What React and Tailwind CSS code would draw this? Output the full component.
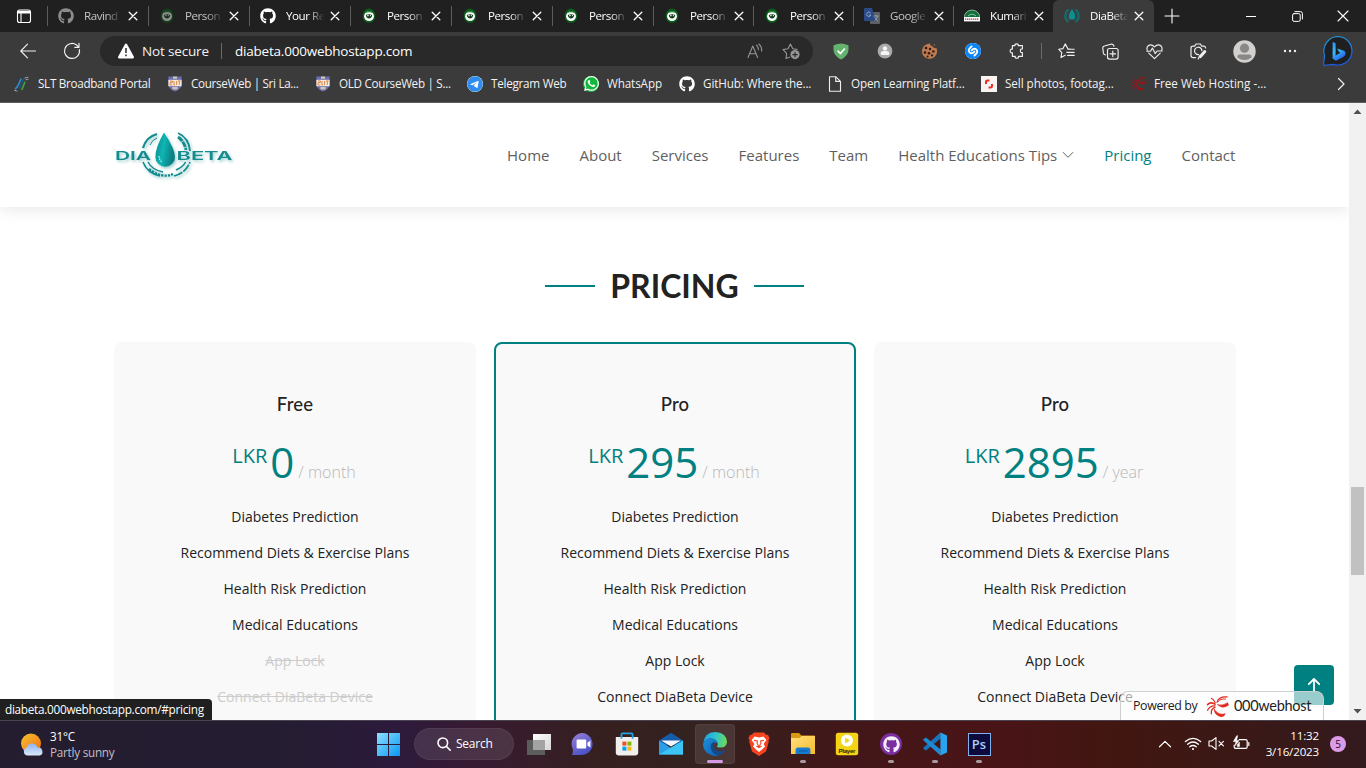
import React from "react";
import { FaGithub, FaTelegram, FaWhatsapp } from "react-icons/fa6";
import { SiShazam } from "react-icons/si";

const UI = "font-['Open_Sans','Noto_Sans',sans-serif]";

function Stroke({ size = 16, box = 16, w = 1, children, className = "" }) {
  return (
    <svg width={size} height={size} viewBox={`0 0 ${box} ${box}`} fill="none" stroke="currentColor" strokeWidth={w} strokeLinecap="round" strokeLinejoin="round" className={className}>
      {children}
    </svg>
  );
}

function EyeIcon() {
  return (
    <svg width="16" height="16" viewBox="0 0 16 16">
      <ellipse cx="8" cy="7.8" rx="6.4" ry="7.2" fill="#0c5c1b" />
      <circle cx="8" cy="8.2" r="4.9" fill="#fff" />
      <path d="M3.6 5Q8 1 12.4 5Q8 3.4 3.6 5Z" fill="#1b7a2c" />
      <path d="M4.8 7Q8 5.6 11.2 7Q10.8 10.4 8 10.4Q5.2 10.4 4.8 7Z" fill="#123f1c" />
      <circle cx="6.9" cy="7.6" r="0.8" fill="#fff" />
      <circle cx="9.4" cy="7.6" r="0.6" fill="#fff" />
    </svg>
  );
}

function TranslateIcon() {
  return (
    <svg width="16" height="16" viewBox="0 0 16 16">
      <rect x="6" y="4" width="10" height="12" rx="1" fill="#5d6066" />
      <path d="M0 1Q0 0 1 0H8L12 13H1Q0 13 0 12Z" fill="#2b4a86" />
      <path d="M6.6 5A2.2 2.2 0 1 0 6.9 7H4.8" stroke="#8fa3c9" fill="none" />
      <path d="M9.5 8H14.5M12 7V8M13.6 8Q13 11 10.5 12.6M10.8 9.5Q12 12 14 13" stroke="#a6a8ac" strokeWidth="0.8" fill="none" />
    </svg>
  );
}

function KumariIcon() {
  return (
    <svg width="16" height="16" viewBox="0 0 16 16">
      <path d="M0 9.5Q1 2.5 8 2Q15 2.5 16 9.5Z" fill="#12703a" stroke="#d9ece0" strokeWidth="0.6" />
      <path d="M4 8Q8 4.4 12 8" stroke="#b9dcc6" strokeWidth="0.7" fill="none" />
      <rect x="0" y="9" width="16" height="4.4" fill="#fff" />
      <path d="M1 11.2H15" stroke="#9a4450" strokeWidth="1.2" strokeDasharray="1.4 0.6" />
    </svg>
  );
}

function DropIcon() {
  return (
    <svg width="16" height="16" viewBox="0 0 16 16" fill="none" stroke="#0a7f80">
      <path d="M5.2 1.4A7.2 7.2 0 0 0 4.4 14.2M10.8 1.4A7.2 7.2 0 0 1 11.6 14.2" strokeWidth="1.1" />
      <path d="M4 4A5.5 5.5 0 0 0 5.6 12.8M12 4A5.5 5.5 0 0 1 10.4 12.8" strokeWidth="0.8" />
      <path d="M8 1Q11.4 6 11.2 8.4A3.2 3.2 0 0 1 4.8 8.4Q4.6 6 8 1Z" fill="#0c8f90" stroke="none" />
    </svg>
  );
}

const tabs = [
  { icon: <FaGithub size={16} className="text-[#8c8c8c]" />, text: "Ravind", dim: true },
  { icon: <span className="opacity-50"><EyeIcon /></span>, text: "Person", dim: true },
  { icon: <FaGithub size={16} className="text-white" />, text: "Your Re" },
  { icon: <EyeIcon />, text: "Person" },
  { icon: <EyeIcon />, text: "Person" },
  { icon: <EyeIcon />, text: "Person" },
  { icon: <EyeIcon />, text: "Person", narrow: true },
  { icon: <EyeIcon />, text: "Person", narrow: true },
  { icon: <TranslateIcon />, text: "Google", dim: true, narrow: true },
  { icon: <KumariIcon />, text: "Kumari", narrow: true },
  { icon: <DropIcon />, text: "DiaBeta", active: true },
];

function Tab({ tab }) {
  return (
    <div className={"flex h-8 shrink-0 items-center " + (tab.narrow ? "w-[100px] " : "w-[101px] ") + (tab.active ? "rounded-t-[6px] bg-[#3b3b3b]" : "")}>
      <div className={"h-5 w-px shrink-0 " + (tab.active ? "" : "bg-[#5c5c5c]")} />
      <div className="ml-[10px] flex w-4 shrink-0 justify-center">{tab.icon}</div>
      <div className={"ml-[10px] w-[39px] shrink-0 overflow-hidden whitespace-nowrap text-[11.6px] leading-4 tracking-[-0.04em] [mask-image:linear-gradient(90deg,#000_55%,transparent_98%)] " + (tab.dim ? "text-[#c4c4c4]" : "text-white")}>{tab.text}</div>
      <Stroke size={10} box={10} w={1.3} className="ml-[5px] shrink-0 text-white"><path d="M1.2 1.2L8.8 8.8M8.8 1.2L1.2 8.8" /></Stroke>
    </div>
  );
}

function TabStrip() {
  return (
    <div className="flex h-8 items-center bg-[#202020]">
      <div className="flex w-[47px] shrink-0 justify-center">
        <Stroke size={16} w={1.1} className="text-white"><rect x="1.5" y="2" width="13" height="12.5" rx="2" /><path d="M1.8 4.2H14.2" strokeWidth="2.6" strokeLinecap="butt" /><path d="M5 5V14.4" /></Stroke>
      </div>
      {tabs.map((t, i) => <Tab key={i} tab={t} />)}
      <div className="flex w-[35px] justify-center text-white"><Stroke size={16} w={1.1}><path d="M8 1V15M1 8H15" /></Stroke></div>
      <div className="ml-auto flex items-center text-white">
        <div className="flex w-[46px] justify-center"><Stroke size={10} box={10}><path d="M0 5.5H10" /></Stroke></div>
        <div className="flex w-[46px] justify-center"><Stroke size={11} box={11}><rect x="0.6" y="2.6" width="7.6" height="7.8" rx="1.5" /><path d="M3 0.6H8.4Q10.4 0.6 10.4 2.6V8" /></Stroke></div>
        <div className="flex w-[46px] justify-center"><Stroke size={12} box={12} w={1.1}><path d="M1 1L11 11M11 1L1 11" /></Stroke></div>
      </div>
    </div>
  );
}

function Cell({ children, w = "w-11" }) {
  return <div className={"flex h-[38px] shrink-0 items-center justify-center " + w}>{children}</div>;
}

function BingIcon() {
  return (
    <svg width="32" height="32" viewBox="0 0 32 32">
      <defs>
        <linearGradient id="bingRing" x1="0" y1="0" x2="0.3" y2="1"><stop offset="0" stopColor="#1fa5dc" /><stop offset="1" stopColor="#1c5be0" /></linearGradient>
        <linearGradient id="bingB" x1="0" y1="0" x2="0.5" y2="1"><stop offset="0" stopColor="#2b8bf0" /><stop offset="0.5" stopColor="#37bdf5" /><stop offset="1" stopColor="#2563eb" /></linearGradient>
      </defs>
      <path d="M16 1.5A14.5 14.3 0 1 1 11 29.4L2.2 30.4Q1.4 30.4 1.6 29L2.6 20.6A14.5 14.5 0 0 1 16 1.5Z" fill="#1f1f22" stroke="url(#bingRing)" strokeWidth="1.2" />
      <path d="M10.6 6.8L13.6 8.2V20.4L18.4 17.7L16.8 16.8L15.3 13.4L22.4 16Q23.6 17 23.6 18.5Q23.6 20.6 21.6 21.8L14 25.8L10.6 23.4Z" fill="url(#bingB)" />
    </svg>
  );
}

function Toolbar() {
  return (
    <div className="flex h-[38px] items-center bg-[#3b3b3b] pl-[6px] text-[#f0f0f0]">
      <Cell><Stroke size={16} w={1.1}><path d="M15.5 8H0.8M7.5 1.2L0.8 8L7.5 14.8" /></Stroke></Cell>
      <Cell><Stroke size={18} box={18} w={1.15}><path d="M16.4 7.6A7.5 7.5 0 1 1 13.6 3L15.8 5.2M16 1.2V5.4H11.8" /></Stroke></Cell>
      <div className="ml-[6px] flex h-[30px] w-[713px] shrink-0 items-center rounded-full bg-[#292929] pl-[18px]">
        <svg width="16" height="16" viewBox="0 0 16 16"><path d="M8 0.5Q8.7 0.5 9.1 1.3L15.8 13.6Q16.4 15.5 14.7 15.5H1.3Q-0.4 15.5 0.2 13.6L6.9 1.3Q7.3 0.5 8 0.5Z" fill="#fff" /><path d="M8 5V10M8 11.6V13.2" stroke="#292929" strokeWidth="1.5" /></svg>
        <div className="ml-2 w-[79px] whitespace-nowrap text-[13.5px] leading-5 tracking-[-0.012em] text-[#f2f2f2]">Not secure</div>
        <div className="h-4 w-px bg-[#6a6a6a]" />
        <div className="ml-[13px] whitespace-nowrap text-[13.5px] leading-5 tracking-[-0.016em] text-white">diabeta.000webhostapp.com</div>
        <div className="ml-auto mr-[13px] flex items-center gap-[19px] text-[#959595]">
          <Stroke size={16} w={1.1}><path d="M1 14.5L5.8 3L10.6 14.5M2.6 10.8H9M9.5 2.2Q11.4 3.6 11.4 6.6M11.8 1Q15 3.4 14.6 8" /></Stroke>
          <svg width="18" height="18" viewBox="0 0 18 18"><path d="M8 15L4 16.5L4.6 11.4L1 7.6L6 6.8L8.4 2L10.8 6.8L15.6 7.5" fill="none" stroke="currentColor" strokeWidth="1.1" strokeLinejoin="round" /><circle cx="13" cy="12.6" r="4.6" fill="currentColor" /><path d="M13 10V15.2M10.4 12.6H15.6" stroke="#292929" strokeWidth="1.1" /></svg>
        </div>
      </div>
      <div className="w-[6px] shrink-0" />
      <Cell><svg width="16" height="17" viewBox="0 0 16 17"><path d="M8 0.5Q11 0.8 15.5 2.2V7Q15 13 8 16.5Q1 13 0.5 7V2.2Q5 0.8 8 0.5Z" fill="#63b36e" /><path d="M4.6 7.6L7.4 10.6L11.8 5.4" fill="none" stroke="#fff" strokeWidth="1.6" /></svg></Cell>
      <Cell><svg width="16" height="16" viewBox="0 0 16 16"><circle cx="8" cy="8" r="7.4" fill="#a9a9a9" /><circle cx="8" cy="5.4" r="2.2" fill="#f5f5f5" /><path d="M3.8 12V9.6Q4.4 7.8 8 7.8Q11.6 7.8 12.2 9.6V12Z" fill="#f5f5f5" /></svg></Cell>
      <Cell><svg width="16" height="16" viewBox="0 0 16 16"><path d="M9 0.5Q9 3 11.5 3Q11.5 5 15.5 5.2A7.6 7.6 0 1 1 3 3Q6 0.3 9 0.5Z" fill="#bd7a50" /><g fill="#2a1b14"><circle cx="5" cy="5" r="1.3" /><circle cx="9" cy="6" r="1.2" /><circle cx="4" cy="9.5" r="1.3" /><circle cx="8" cy="10.2" r="1.3" /><circle cx="12.4" cy="8.4" r="1.2" /><circle cx="11" cy="12.4" r="1.1" /><circle cx="6.6" cy="13.4" r="1" /><circle cx="13.5" cy="2" r="0.9" fill="#8a573a" /></g></svg></Cell>
      <Cell><span className="rounded-full bg-white"><SiShazam size={16} className="text-[#0a84f7]" /></span></Cell>
      <Cell><Stroke size={16} w={1.15}><path d="M3.4 2.6H6Q5.6 0.8 7.6 0.8Q9.6 0.8 9.2 2.6H13.4V6Q11.4 5.6 11.4 7.8Q11.4 10 13.4 9.6V13.4H9.4Q9.8 15.2 7.8 15.2Q5.8 15.2 6.2 13.4H3.4V9.8Q1.2 10.4 1.2 8Q1.2 5.6 3.4 6.2Z" /></Stroke></Cell>
      <div className="ml-[2px] mr-[2px] h-4 w-px shrink-0 bg-[#6a6a6a]" />
      <Cell><Stroke size={17} box={17} w={1.15}><path d="M12.2 6H10L7.2 0.9L5 5.6L0.8 6.3L3.8 9.6L3 14.4L7.2 12.2M9.8 6.2H16.2M8.8 9.3H16.2M9.6 12.4H16.2" /></Stroke></Cell>
      <Cell><Stroke size={17} box={17} w={1.15}><rect x="5.5" y="5.5" width="10.6" height="10.6" rx="2" /><path d="M10.8 8V13.6M8 10.8H13.6M3.4 11.8Q1.6 11.8 1.4 10L0.8 5.2Q0.6 3.4 2.4 3L8.8 1.2Q11 0.8 11.8 2.6V3.2" /></Stroke></Cell>
      <Cell><Stroke size={17} box={17} w={1.15}><path d="M1.2 7.2Q0.4 4.4 2.2 2.8Q5.2 0.6 8.5 3.8Q11.8 0.6 14.8 2.8Q16.6 4.4 15.8 7.2M2.8 10.2L8.5 15.6L14.2 10.2M0.8 8.2H4.6L6.4 5L9.2 10.6L11 8H16.2" /></Stroke></Cell>
      <Cell><Stroke size={17} box={17} w={1.2}><path d="M5.6 14.6H3Q1 14.6 1 12.6V5Q1 3.2 3 3.2H4.6L6 1H10.4L11.8 3.2H13.6Q15.4 3.2 15.6 5M8.6 11.6A3.7 3.7 0 1 1 11.9 7.6" /><path d="M10.4 13.6L14.8 8.6" strokeWidth="3" /><path d="M8.2 16L9.6 13" /></Stroke></Cell>
      <Cell w="w-[48px]"><svg width="23" height="23" viewBox="0 0 23 23"><circle cx="11.5" cy="11.5" r="11.2" fill="#d2d0ce" /><circle cx="11.5" cy="8.2" r="4.6" fill="#8a8886" /><path d="M4.4 17.4Q4 14.4 7 14.4H16Q19 14.4 18.6 17.4Q11.5 22.4 4.4 17.4Z" fill="#8a8886" /></svg></Cell>
      <Cell><svg width="14" height="4" viewBox="0 0 14 4" fill="#eee"><circle cx="2" cy="2" r="1.2" /><circle cx="7" cy="2" r="1.2" /><circle cx="12" cy="2" r="1.2" /></svg></Cell>
      <Cell w="w-[52px]"><BingIcon /></Cell>
    </div>
  );
}

function CrestIcon() {
  return (
    <svg width="16" height="16" viewBox="0 0 16 16">
      <path d="M1.4 0.6H14.6V9Q14.2 13.4 8 15.6Q1.8 13.4 1.4 9Z" fill="#6a6fae" />
      <rect x="1.4" y="3.8" width="13.2" height="6.4" fill="#f4ece6" />
      <path d="M3 5H5.4V6.6H3V9H5.4M7 5V9H8M9.6 5V9M11 5H13.6M12.3 5V9" stroke="#dd8540" strokeWidth="1" fill="none" />
      <path d="M6 0.6H10V2.8H6ZM5.4 11H10.6V13.4H5.4Z" fill="#d4c3b4" />
    </svg>
  );
}

function SwirlIcon({ size = 16, color = "#c01010" }) {
  return (
    <svg width={size} height={size} viewBox="0 0 24 24" fill="none" stroke={color} strokeLinecap="round">
      <path d="M22 2Q13 1.4 11.6 7.6" strokeWidth="1.3" />
      <path d="M20.4 4.2Q15 3.6 12.4 7" strokeWidth="1" />
      <path d="M5.6 3.4Q8 4.6 9.6 8" strokeWidth="1.2" />
      <path d="M1.6 10Q5 6.6 9.4 9.6" strokeWidth="1.6" />
      <path d="M1.6 16Q4 11 9.4 11.4" strokeWidth="1.2" />
      <path d="M5.6 19.6Q5 14.6 9.4 13" strokeWidth="1.3" />
      <path d="M8.6 15Q8.6 20.6 15.4 22.6Q19 23 20 19.6Q13.6 21.6 8.6 15Z" fill={color} strokeWidth="0.6" />
      <path d="M12.2 10.2Q17 15 23.4 10.6Q22.6 8 22.6 8Q18 11.6 12.2 10.2Z" fill={color} strokeWidth="0.6" />
    </svg>
  );
}

const bookmarks = [
  { w: "w-[153px]", t: "SLT Broadband Portal", tr: "tracking-[-0.026em]", icon: <svg width="16" height="16" viewBox="0 0 16 16" fill="none" strokeLinecap="round"><path d="M7 3L3.6 10.4L1.6 12.6" stroke="#2d8fd6" strokeWidth="1.6" /><path d="M10.8 6.4L8 13.4" stroke="#3fa348" strokeWidth="1.6" /><path d="M11 2L14.8 1M0.8 14.4L3 15M12 3.8L14 3.4" stroke="#a7b9c4" strokeDasharray="1 1" /><path d="M9.6 3L5.4 12" stroke="#1d5b86" strokeWidth="1.2" /></svg> },
  { w: "w-[148px]", t: "CourseWeb | Sri La...", tr: "tracking-[-0.028em]", icon: <CrestIcon /> },
  { w: "w-[152px]", t: "OLD CourseWeb | S...", tr: "tracking-[-0.026em]", icon: <CrestIcon /> },
  { w: "w-[116px]", t: "Telegram Web", tr: "tracking-[-0.022em]", icon: <span className="rounded-full bg-white"><FaTelegram size={16} className="text-[#2f8df0]" /></span> },
  { w: "w-[96px]", t: "WhatsApp", tr: "tracking-[-0.01em]", icon: <span className="relative flex h-4 w-4 items-center justify-center rounded-full bg-[#12b83e]"><FaWhatsapp size={17} className="shrink-0 text-white" /></span> },
  { w: "w-[148px]", t: "GitHub: Where the...", tr: "tracking-[-0.01em]", icon: <FaGithub size={16} className="text-white" /> },
  { w: "w-[154px]", t: "Open Learning Platf...", tr: "tracking-[-0.015em]", icon: <Stroke size={16} w={1.1} className="text-[#eee]"><path d="M2.5 0.7H8.7L13.5 5.4V15.3H2.5ZM8.7 0.9V5.4H13.4" /></Stroke> },
  { w: "w-[149px]", t: "Sell photos, footag...", tr: "tracking-[-0.006em]", icon: <svg width="16" height="16" viewBox="0 0 16 16"><rect width="16" height="16" fill="#f8f4f4" /><path d="M8.4 4.4H6.4Q5 4.4 5 5.8V8M7.6 11.6H9.6Q11 11.6 11 10.2V8" stroke="#ee2b24" strokeWidth="2" fill="none" /></svg> },
  { w: "w-[150px]", t: "Free Web Hosting -...", tr: "tracking-[0em]", icon: <SwirlIcon size={15} color="#b00d12" /> },
];

function Bookmarks() {
  return (
    <div className="flex h-[33px] items-center border-b border-[#5d5d5d] bg-[#3b3b3b] pb-[5px] pl-[14px] text-[#f2f2f2]">
      {bookmarks.map((b) => (
        <div key={b.t} className={"flex shrink-0 items-center gap-2 " + b.w}>
          <div className="flex w-4 shrink-0 justify-center">{b.icon}</div>
          <span className={"-mt-px whitespace-nowrap text-[11.7px] leading-4 " + b.tr}>{b.t}</span>
        </div>
      ))}
      <Stroke size={14} box={14} w={1.2} className="ml-auto mr-[18px]"><path d="M4.5 1.5L10 7L4.5 12.5" /></Stroke>
    </div>
  );
}

function Logo() {
  return (
    <svg width="122" height="56" viewBox="0 0 122 56" className="overflow-visible">
      <defs>
        <linearGradient id="drop" x1="0" y1="0" x2="1" y2="0.3"><stop offset="0" stopColor="#0c8d8f" /><stop offset="0.5" stopColor="#12b4b4" /><stop offset="1" stopColor="#0a7f82" /></linearGradient>
        <filter id="soft" x="-10%" y="-10%" width="130%" height="140%"><feDropShadow dx="1.4" dy="1.8" stdDeviation="1.5" floodColor="#0b7f82" floodOpacity="0.4" /></filter>
      </defs>
      <g filter="url(#soft)" fill="none" stroke="#128a8d">
        <path d="M27 21Q30 10 41 7" strokeWidth="2.2" />
        <path d="M34 18Q36 13 41 11" strokeWidth="1" />
        <path d="M62 6Q73 11 74 24" strokeWidth="1.8" />
        <path d="M62 10Q68 14 70 23" strokeWidth="2.8" strokeDasharray="6 0.8" />
        <path d="M27 35Q31 46 44 49" strokeWidth="1.6" />
        <path d="M32 35Q36 43 47 45" strokeWidth="1.4" />
        <path d="M58 49Q70 46 74 35" strokeWidth="1.8" strokeDasharray="9 1.2" />
        <path d="M60 43Q67 40 69.6 35" strokeWidth="1.6" />
        <path d="M33 42Q46 52 57 47" strokeWidth="2.4" strokeDasharray="2.4 1" />
        <path d="M48 5.5Q59 22 59 30A9.7 9.6 0 0 1 39.4 30Q39.4 20 48 5.5Z" fill="url(#drop)" stroke="none" />
        <path d="M43 29Q43 33 46 35" stroke="#bff2f0" strokeWidth="1.2" strokeDasharray="1.5 1" />
        <g fill="#128a8d" stroke="none" fontFamily="Inter, sans-serif" fontWeight="600" fontSize="12">
          <text x="-1" y="33" textLength="36" lengthAdjust="spacingAndGlyphs">DIA</text>
          <text x="60.5" y="33" textLength="56" lengthAdjust="spacingAndGlyphs">BETA</text>
        </g>
      </g>
    </svg>
  );
}

function SiteHeader() {
  return (
    <header className="relative z-10 flex h-[104px] shrink-0 items-center justify-between bg-white pr-[113px] pl-[116px] shadow-[0_2px_15px_rgba(0,0,0,0.1)]">
      <Logo />
      <nav className="flex items-center gap-[30px] pr-[0.6px] font-['Open_Sans',sans-serif] text-[15px] leading-5 text-[#5f5f5f]">
        <a>Home</a>
        <a>About</a>
        <a>Services</a>
        <a>Features</a>
        <a>Team</a>
        <a className="flex items-center gap-[5px]">Health Educations Tips<Stroke size={12} box={12} w={1}><path d="M1.2 3.5L6 8.3L10.8 3.5" /></Stroke></a>
        <a className="text-[#008080]">Pricing</a>
        <a>Contact</a>
      </nav>
    </header>
  );
}

const features = ["Diabetes Prediction", "Recommend Diets & Exercise Plans", "Health Risk Prediction", "Medical Educations", "App Lock", "Connect DiaBeta Device"];
const plans = [
  { name: "Free", price: "0", per: "month", off: 4 },
  { name: "Pro", price: "295", per: "month", off: 9, featured: true },
  { name: "Pro", price: "2895", per: "year", off: 9 },
];

function PlanCard({ plan }) {
  return (
    <div className={"flex h-[440px] w-[362px] shrink-0 flex-col items-center rounded-lg border-2 bg-[#f9f9f9] pt-[47px] " + (plan.featured ? "border-[#008080]" : "border-[#f9f9f9]")}>
      <h3 className="font-['Lato',sans-serif] text-[18.5px] leading-[26px] font-medium tracking-[0.01em] text-[#222]">{plan.name}</h3>
      <div className="mt-[17px] mr-[2px] flex h-[56px] items-start text-[#008080]">
        <span className="mt-[8px] text-[20px] leading-[28px]">LKR</span>
        <span className="ml-[3px] text-[42px] leading-[56px]">{plan.price}</span>
        <span className="mt-[26px] ml-[4px] text-[16px] leading-[24px] font-light text-[#b8b8b8]">/ {plan.per}</span>
      </div>
      <ul className="mt-[9px] text-center text-[14px] leading-[36px] text-[#222]">
        {features.map((f, i) => <li key={f} className={i >= plan.off ? "text-[#ccc] line-through" : ""}>{f}</li>)}
      </ul>
    </div>
  );
}

function Page() {
  return (
    <div className="flex h-[617px] bg-white">
      <div className="relative flex h-full w-[1349px] flex-col overflow-hidden font-['Open_Sans',sans-serif]">
        <SiteHeader />
        <div className="mt-[59px] flex h-10 shrink-0 items-center justify-center gap-[15px]">
          <div className="h-0.5 w-[50px] bg-[#008080]" />
          <h2 className="-mt-px font-['Lato',sans-serif] text-[32px] leading-10 font-bold text-[#222]">PRICING</h2>
          <div className="h-0.5 w-[50px] bg-[#008080]" />
        </div>
        <div className="mt-[36px] flex gap-[18px] pl-[114px]">
          {plans.map((p, i) => <PlanCard key={i} plan={p} />)}
        </div>
        <div className="absolute right-[15px] bottom-[15px] flex h-10 w-10 items-center justify-center rounded bg-[#008080] text-white">
          <Stroke size={16} w={1.8}><path d="M8 14V2M2.8 7.2L8 2L13.2 7.2" /></Stroke>
        </div>
        <div className="absolute right-[25px] bottom-0 flex h-[29px] w-[204px] items-center rounded-t-lg border border-b-0 border-[#cfcfcf] bg-white/60 pl-3 text-[#222]">
          <span className="w-[73px] whitespace-nowrap text-[12.4px] leading-5 tracking-[-0.03em]">Powered by</span>
          <SwirlIcon size={23} color="#e0281c" />
          <span className="ml-[5px] font-['Lato',sans-serif] text-[14.5px] leading-5 tracking-[-0.02em]">000webhost</span>
        </div>
        <div className={"absolute bottom-0 left-0 flex h-[21px] w-[212px] items-center rounded-tr bg-[#202020] pl-[5px] text-[11.8px] tracking-[-0.025em] whitespace-nowrap text-white " + UI}>diabeta.000webhostapp.com/#pricing</div>
      </div>
      <div className="flex h-full w-[17px] flex-col items-center bg-[#f1f1f1]">
        <svg width="17" height="17" viewBox="0 0 17 17"><path d="M4.5 11L8.5 6.5L12.5 11Z" fill="#505050" /></svg>
        <div className="mt-[367px] h-[88px] w-[13px] bg-[#c1c1c1]" />
        <svg width="17" height="17" viewBox="0 0 17 17" className="mt-auto"><path d="M4.5 6L8.5 10.5L12.5 6Z" fill="#505050" /></svg>
      </div>
    </div>
  );
}

function TaskItem({ children, run }) {
  return (
    <div className="flex h-[47px] w-11 shrink-0 flex-col items-center pt-[11px]">
      <div className="flex h-6 items-center">{children}</div>
      {run && <div className="mt-[4px] h-[3px] w-[6px] rounded-full bg-[#a99a9c]" />}
    </div>
  );
}

function EdgeIcon() {
  return (
    <svg width="24" height="24" viewBox="0 0 24 24" className="shrink-0">
      <defs>
        <linearGradient id="edgeTop" x1="0" y1="0.3" x2="1" y2="0.4"><stop offset="0" stopColor="#219fe0" /><stop offset="0.5" stopColor="#2dc3d0" /><stop offset="1" stopColor="#6cdb55" /></linearGradient>
        <linearGradient id="edgeLow" x1="0" y1="0" x2="1" y2="1"><stop offset="0" stopColor="#1b8fdc" /><stop offset="1" stopColor="#1160b4" /></linearGradient>
      </defs>
      <path d="M0.3 11Q1.4 0.4 12 0Q23.6 0.6 24 10Q23.6 15.4 18 15.6Q13.6 15.6 13.8 14.2Q15.4 12.6 14.4 10.4Q12 6 6.6 6.6Q2 7.6 0.3 11Z" fill="url(#edgeTop)" />
      <path d="M0 12Q1.6 6.4 7.6 6.4Q13 6.4 14.6 11Q8.4 9.4 8 14.4Q8.4 21 16 23.2Q10 25.2 5 21.6Q0 18 0 12Z" fill="url(#edgeLow)" />
      <path d="M10.6 9.8Q6.4 12.4 8 17Q10.6 23.4 16.4 23.2Q20.6 21.8 22.6 18Q15 21.4 11.4 16.6Q9.6 13.4 11.8 11Z" fill="#124a8c" />
    </svg>
  );
}

function Taskbar() {
  return (
    <div className="flex h-12 items-center border-t border-[#4a4350] bg-[linear-gradient(90deg,#241d30_0px,#241d31_280px,#2c1a3c_390px,#371b33_470px,#36201f_600px,#33221f_700px,#421719_840px,#4a1417_990px,#421611_1110px,#3d1814_1200px,#331a1e_1366px)] text-white">
      <div className="flex w-[366px] items-center pl-[20px]">
        <svg width="24" height="24" viewBox="0 0 24 24">
          <defs><linearGradient id="sun" x1="0" y1="0" x2="1" y2="1"><stop offset="0" stopColor="#f8c52e" /><stop offset="1" stopColor="#ee6a16" /></linearGradient><linearGradient id="cloud" x1="0" y1="0" x2="0" y2="1"><stop offset="0" stopColor="#8fb3ef" /><stop offset="1" stopColor="#dce9fc" /></linearGradient></defs>
          <circle cx="11" cy="10.5" r="10" fill="url(#sun)" />
          <path d="M7 22.6A4.2 4.2 0 0 1 6.6 14.6A5.6 5.6 0 0 1 17.4 14.8A4 4 0 0 1 19.4 22.6Z" fill="url(#cloud)" />
        </svg>
        <div className="-mt-[2px] ml-[6px] text-[11.7px] leading-4 tracking-[-0.02em]"><div>31°C</div><div className="text-[#c2bec8]">Partly sunny</div></div>
      </div>
      <TaskItem><svg width="23" height="23" viewBox="0 0 23 23"><defs><linearGradient id="win" x1="0" y1="0" x2="1" y2="1"><stop offset="0" stopColor="#8be0fd" /><stop offset="1" stopColor="#0a97f3" /></linearGradient></defs><path d="M0 0H11V11H0ZM12 0H23V11H12ZM0 12H11V23H0ZM12 12H23V23H12Z" fill="url(#win)" /></svg></TaskItem>
      <div className="-mt-px ml-[4px] flex h-8 w-[100px] shrink-0 items-center rounded-full border border-white/5 bg-white/10 pl-[22px]">
        <Stroke size={14} box={14} w={1.6}><circle cx="5.8" cy="5.8" r="4.8" /><path d="M9.4 9.4L13.2 13.2" /></Stroke>
        <span className="ml-[5px] text-[12px] leading-4 tracking-[-0.02em]">Search</span>
      </div>
      <div className="w-[3px] shrink-0" />
      <TaskItem><svg width="24" height="23" viewBox="0 0 24 23"><defs><linearGradient id="tv" x1="0" y1="0" x2="1" y2="1"><stop offset="0" stopColor="#fff" /><stop offset="1" stopColor="#d5d5d5" /></linearGradient></defs><rect x="6" y="1" width="18" height="16" fill="url(#tv)" /><rect x="0" y="7" width="18" height="15" fill="#5c5c5c" /><rect x="6" y="7" width="12" height="10" fill="#a3a3a3" /></svg></TaskItem>
      <TaskItem><svg width="24" height="24" viewBox="0 0 24 24"><defs><linearGradient id="chat" x1="0" y1="0" x2="0.6" y2="1"><stop offset="0" stopColor="#9a80d6" /><stop offset="1" stopColor="#4750c8" /></linearGradient></defs><path d="M12 1A11 11 0 1 1 9 23H1Q2.4 20.6 1.8 17A11 11 0 0 1 12 1Z" fill="url(#chat)" /><rect x="5.6" y="7.6" width="9.6" height="9" rx="1" fill="#fff" /><path d="M16.4 10.8L19.4 8.6V15.6L16.4 13.4Z" fill="#fff" /></svg></TaskItem>
      <TaskItem><svg width="24" height="24" viewBox="0 0 24 24"><path d="M6.4 6V2.5Q6.4 1.4 7.6 1.4H16.4Q17.6 1.4 17.6 2.5V6" fill="none" stroke="#23a3e6" strokeWidth="1.8" /><path d="M0.8 5H23.2V20.5Q23.2 23.4 20 23.4H4Q0.8 23.4 0.8 20.5Z" fill="#f1efee" /><path d="M7.4 9.6H11.4V13.6H7.4Z" fill="#f04e23" /><path d="M12.4 9.6H16.4V13.6H12.4Z" fill="#7fb900" /><path d="M7.4 14.6H11.4V18.6H7.4Z" fill="#00a3ee" /><path d="M12.4 14.6H16.4V18.6H12.4Z" fill="#fdb813" /><path d="M6.4 5V6.8M17.6 5V6.8" stroke="#23a3e6" strokeWidth="1.8" /></svg></TaskItem>
      <TaskItem><svg width="24" height="24" viewBox="0 0 24 24"><path d="M0 8.6L12 0.8L24 8.6V13H0Z" fill="#155ba8" /><path d="M0 8.6L12 16L24 8.6V22.4H0Z" fill="#2a9fe8" /><path d="M0 22.4L24 8.6V22.4Z" fill="#3cc4f5" /><path d="M2.2 8.4H21.8L12 14.6Z" fill="#f3f6fa" /></svg></TaskItem>
      <div className="flex h-[47px] w-11 shrink-0 items-start justify-center pt-[3px]">
        <div className="flex h-10 w-10 flex-col items-center rounded border border-white/5 bg-white/10 pt-[7px]"><EdgeIcon /><div className="mt-[4px] h-[3px] w-4 shrink-0 rounded-full bg-[#d79be6]" /></div>
      </div>
      <TaskItem><svg width="22" height="24" viewBox="0 0 22 24"><path d="M6 0.6H16L18.4 3L20 2.8L21.6 6.4L20.4 8L20.8 9.6L18 19.4L11 24L4 19.4L1.2 9.6L1.6 8L0.4 6.4L2 2.8L3.6 3Z" fill="#f7431f" /><path d="M6.6 4.6L11 5.6L15.4 4.6L18.4 8L15.6 12L17 14.6L14 17.6L11 20L8 17.6L5 14.6L6.4 12L3.6 8Z" fill="#fff" /><path d="M6 8.4L9.4 9L9 11L11 15L13 11L12.6 9L16 8.4M8.4 14L11 15.6L13.6 14" fill="none" stroke="#f7431f" strokeWidth="1.1" /></svg></TaskItem>
      <TaskItem run><svg width="24" height="22" viewBox="0 0 24 22"><defs><linearGradient id="fold" x1="0" y1="0" x2="1" y2="1"><stop offset="0" stopColor="#ffe07d" /><stop offset="1" stopColor="#f8bc2c" /></linearGradient></defs><path d="M0 1Q0 0 1 0H8L10.4 2.4H23Q24 2.4 24 3.4V8H0Z" fill="#d99a12" /><path d="M0 5H8.4L10.8 3H24V21H0Z" fill="url(#fold)" /><path d="M4.6 21V17Q4.6 14.4 7 14.4H17Q19.4 14.4 19.4 17V21Z" fill="#177bd0" /><path d="M7.6 18H16.4" stroke="#0d5fae" strokeWidth="1.2" /></svg></TaskItem>
      <TaskItem><svg width="24" height="24" viewBox="0 0 24 24"><rect x="0.8" y="0.8" width="22.4" height="22.4" rx="2.5" fill="#f2d414" /><circle cx="12" cy="8.4" r="6" fill="#fff" /><path d="M10.2 5.4L15 8.4L10.2 11.4Z" fill="#f2d414" /><text x="12" y="21" textAnchor="middle" fontFamily="Liberation Sans, sans-serif" fontWeight="700" fontSize="6.2" fill="#2b2705" textLength="17">Player</text></svg></TaskItem>
      <TaskItem run><div className="flex h-[22px] w-[22px] items-center justify-center rounded-full bg-[#7a2ea0]"><FaGithub size={17} className="text-[#f6effa]" /></div></TaskItem>
      <TaskItem run><svg width="24" height="24" viewBox="0 0 24 24"><path d="M17.6 6.4L3 18.6L0.6 17Q0 16.4 0.6 15.6L17.4 0.6Z" fill="#1775bb" /><path d="M17.6 17.6L3 5.4L0.6 7Q0 7.6 0.6 8.4L17.4 23.4Z" fill="#1f8ad4" /><path d="M17.4 0.4L24 3.4V20.6L17.4 23.6Z" fill="#2aa3ee" /></svg></TaskItem>
      <TaskItem run><div className="flex h-[23px] w-[23px] items-center justify-center border border-[#7fb2ee] bg-[#0d0a3d] text-[13px] leading-none font-semibold text-[#a9cdfb]">Ps</div></TaskItem>
      <div className="-mt-[2px] ml-auto flex items-center">
        <Stroke size={14} box={14} w={1.2}><path d="M1.5 9.8L7 4.4L12.5 9.8" /></Stroke>
        <Stroke size={18} box={18} w={1.3} className="ml-[12px]"><path d="M1.4 6.6Q9 0.2 16.6 6.6M3.6 9.2Q9 4.8 14.4 9.2M5.8 11.8Q9 9.2 12.2 11.8" /><circle cx="9" cy="14" r="1.1" fill="currentColor" stroke="none" /></Stroke>
        <Stroke size={17} box={17} w={1.1} className="ml-[6px]"><path d="M1 6V11H3.6L8 14.4V2.6L3.6 6ZM11 6.4L15.4 10.8M15.4 6.4L11 10.8" /></Stroke>
        <Stroke size={18} box={18} w={1.2} className="ml-[7px]"><path d="M7.4 4.6H13.6Q15.2 4.6 15.2 6.2V11.8Q15.2 13.4 13.6 13.4H4Q2.2 13.4 2.2 11.8V10M16.8 7.6V10.4" /><path d="M4.6 1L1.4 6.6H4L3 10.8L7 5.4H4.6L5.6 1Z" fill="currentColor" strokeWidth="0.6" /><path d="M5.4 11.4V9.6L7.4 7V11.4Z" fill="currentColor" strokeWidth="0.6" /></Stroke>
        <div className="ml-[9px] w-[60px] text-right text-[11.6px] leading-4 tracking-[-0.015em] whitespace-nowrap"><div>11:32</div><div>3/16/2023</div></div>
        <div className="mr-5 ml-[11px] flex h-4 w-4 items-center justify-center rounded-full bg-[#dc9be8] text-[10px] leading-none text-[#1d1020]">5</div>
      </div>
    </div>
  );
}

export default function App() {
  return (
    <div className={"flex h-[768px] w-[1366px] flex-col overflow-hidden bg-white " + UI}>
      <TabStrip />
      <Toolbar />
      <Bookmarks />
      <Page />
      <Taskbar />
    </div>
  );
}
